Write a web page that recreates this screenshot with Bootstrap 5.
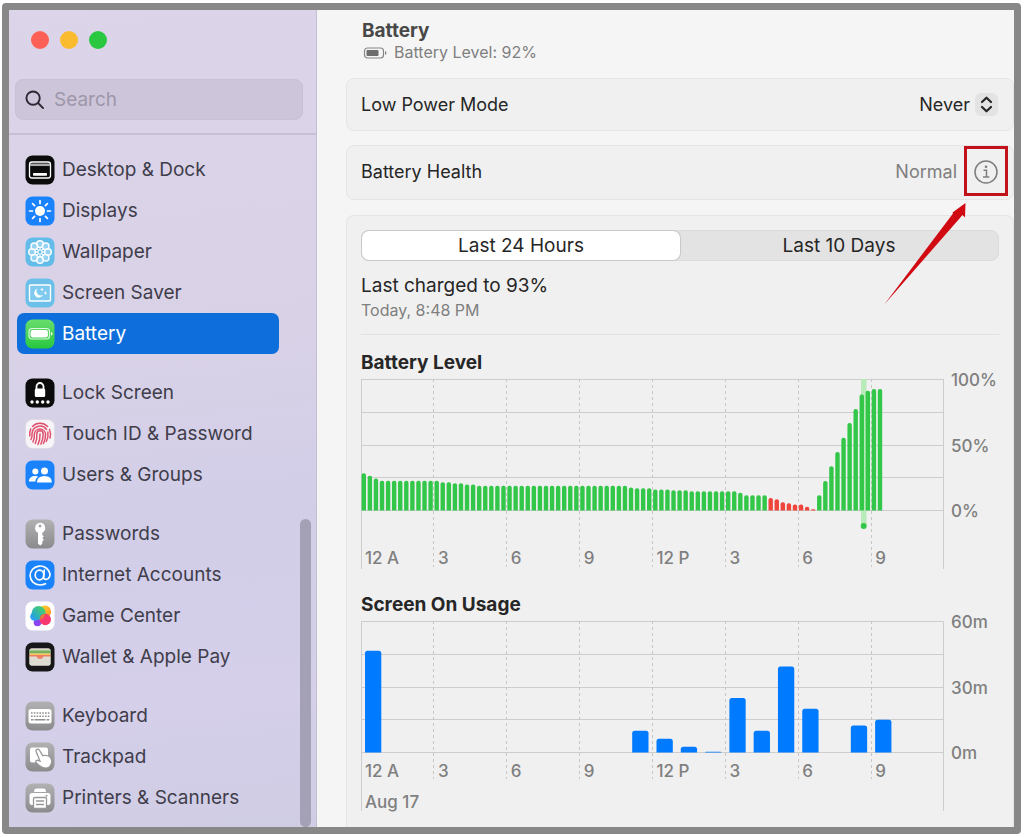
<!DOCTYPE html>
<html lang="en">
<head>
<meta charset="utf-8">
<meta name="viewport" content="width=device-width, initial-scale=1">
<title>Battery</title>
<link href="https://cdn.jsdelivr.net/npm/bootstrap@5.3.0/dist/css/bootstrap.min.css" rel="stylesheet">
<style>
  body { font-family: Inter, "Liberation Sans", sans-serif; font-size: 18px; line-height: 24px; color: #262626; background: #fff; }
  .window { margin: 3px 3px 2px 2px; border: 7px solid #888; border-radius: 4px; background: #f5f5f5; }

  /* sidebar */
  .sidebar { width: 308px; color: #403d4b; background: linear-gradient(175deg, #dcd4e8 0%, #d9d2e7 40%, #d2cee8 62%, #d5cfea 85%, #cfcde4 100%); border-right: 1px solid #c3bed2; }
  .lights { padding: 21px 0 0 22px; gap: 11px; }
  .light { width: 18px; height: 18px; border-radius: 50%; }
  .light-close { background: #fe5f57; }
  .light-min { background: #fbbb2e; }
  .light-zoom { background: #2ac840; }
  .search-wrap { margin: 30px 13px 13px 6px; height: 41px; padding: 1px 0 0 9px; gap: 9px; border-radius: 8px; background: #cdc5d9; border: 1px solid #c9c1d6; }
  .search-wrap input { font-size: 19px; color: #403d4b; }
  .search-wrap input::placeholder { color: #9e97aa; opacity: 1; }
  .side-list { border-top: 2px solid #c7bfd5; padding: 14px 37px 8px 8px; font-size: 19px; }
  .side-group { margin: 0 0 18px; }
  .side-group:last-child { margin: 0; }
  .side-item { height: 41px; padding-left: 8px; gap: 7px; border-radius: 7px; color: inherit; text-decoration: none; white-space: nowrap; }
  .side-item.active { background: #0e6fdc; color: #fff; }
  .side-item svg { width: 30px; height: 30px; flex: none; }
  .thumb { right: 5px; bottom: 0; width: 11px; height: 308px; border-radius: 6px; background: #a4a1b6; }

  /* main pane */
  .pane { padding: 9px 0 0 29px; min-width: 0; }
  .pane-head { padding: 0 16px 16px; color: #484848; }
  .pane-head h1 { font-size: 19px; line-height: 24px; font-weight: 700; }
  .pane-sub { font-size: 16px; line-height: 19px; gap: 6px; color: #7f7f7f; }
  .panel { background: #f0f0f0; border: 1px solid #e5e5e5; border-radius: 8px; padding: 0 14px; margin: 0 0 15px; }
  .panel-power { height: 53px; margin: 0 0 14px; }
  .panel-health { height: 55px; padding-bottom: 1px; }
  .panel-usage { border-bottom: 0; border-radius: 8px 8px 0 0; padding: 14px 14px 14px; margin: 0; }
  .mode-select { appearance: none; border: 0; background: none; color: #262626; padding: 0 29px 0 0; text-align-last: right; font-size: 18px; }
  .chip { right: 1px; width: 23px; height: 23px; border-radius: 6px; background: #e3e3e3; pointer-events: none; }
  .info-btn { width: 24px; height: 24px; margin: 0 1px 0 17px; }
  .callout-box { top: 0; right: 5px; width: 44px; height: 50px; border: 3px solid #c1121b; pointer-events: none; }
  .callout-arrow { top: 56px; right: 45px; pointer-events: none; z-index: 2; }
  .text-dim { color: #7f7f7f; }
  .segments { height: 31px; border-radius: 8px; background: #e3e3e3; border: 1px solid #dcdcdc; font-size: 19px; }
  .segments button { flex: 1 1 0; border: 0; background: none; color: #262626; border-radius: 7px; padding: 0; }
  .segments .on { background: #fff; box-shadow: 0 0 0 1px #c9c9c9; }
  .charged { margin: 13px 0 0; font-size: 19px; }
  .charged-at { font-size: 16px; }
  .rule { height: 1px; background: #e2e2e2; margin: 12px 0 16px; }
  .panel-usage h2 { font-size: 19px; line-height: 24px; font-weight: 700; margin: 0 0 4px; }

  /* charts */
  .panel-usage .chart + h2 { margin-top: 24px; }
  .plot { display: grid; flex: 1 1 0; min-width: 0; font-size: 17px; line-height: 22px; font-weight: 500; }
  .plot > * { grid-area: 1 / 1; min-width: 0; }
  .plot svg { width: 100%; height: 190px; overflow: visible; }
  .plot-labels { align-self: start; white-space: nowrap; }
  .plot-labels span { padding-left: 4px; }
  .hours { display: grid; grid-template-columns: repeat(8, minmax(0, 1fr)); }
  .low-labels { margin-top: 168px; }
  .high-labels { margin-top: 139px; }
  .day { margin-top: 9px; }
  .scale-y { width: 55px; height: 151px; margin: -9px 0 0; padding-left: 7px; font-size: 17px; line-height: 20px; font-weight: 500; }
  .solid { stroke: #cdcdcd; stroke-width: 1; }
  .dash { stroke: #c6c6c6; stroke-width: 1; stroke-dasharray: 3 3; }
</style>
</head>
<body>
<div class="window d-flex overflow-hidden">

  <nav class="sidebar flex-shrink-0 position-relative" aria-label="Settings">
    <div class="lights d-flex">
      <span class="light light-close"></span><span class="light light-min"></span><span class="light light-zoom"></span>
    </div>
    <label class="search-wrap d-flex align-items-center">
      <svg width="20" height="20" viewBox="0 0 21 21" fill="none" stroke="#2b2733" stroke-width="2" stroke-linecap="round"><circle cx="8.500" cy="8.500" r="7"/><path d="M13.700 13.700L19 19"/></svg>
      <input class="border-0 bg-transparent p-0 w-75" type="search" placeholder="Search" aria-label="Search">
    </label>

    <div class="side-list">
      <div class="side-group">
        <a href="#" class="side-item d-flex align-items-center">
          <svg viewBox="0 0 30 30"><rect x=".5" y=".5" width="29" height="29" rx="7" fill="#0b0b0b"/><rect x="4.500" y="7" width="21" height="16" rx="2.500" fill="none" stroke="#fff" stroke-width="1.300"/><path d="M5 9.800h20" stroke="#aaa" stroke-width="2.500"/><rect x="8" y="18" width="14" height="2.800" rx=".8" fill="#fff"/></svg>
          Desktop &amp; Dock</a>
        <a href="#" class="side-item d-flex align-items-center">
          <svg viewBox="0 0 30 30"><rect x=".5" y=".5" width="29" height="29" rx="7" fill="#1a83fb"/><circle cx="15" cy="15" r="5" fill="#fff"/><path d="M15 4.500v3M15 22.500v3M4.500 15h3M22.500 15h3M7.600 7.600l2 2M20.400 20.400l2 2M22.400 7.600l-2 2M9.600 20.400l-2 2" stroke="#fff" stroke-width="1.700" stroke-linecap="round"/></svg>
          Displays</a>
        <a href="#" class="side-item d-flex align-items-center">
          <svg viewBox="0 0 30 30"><rect x=".5" y=".5" width="29" height="29" rx="7" fill="#62bce9"/><g fill="#b5e2f6" fill-opacity=".6" stroke="#fff" stroke-width="1.400"><circle cx="15" cy="7" r="3.300"/><circle cx="20.700" cy="9.300" r="3.300"/><circle cx="23" cy="15" r="3.300"/><circle cx="20.700" cy="20.700" r="3.300"/><circle cx="15" cy="23" r="3.300"/><circle cx="9.300" cy="20.700" r="3.300"/><circle cx="7" cy="15" r="3.300"/><circle cx="9.300" cy="9.300" r="3.300"/></g><path d="M15 10v10M10 15h10M11.500 11.500l7 7M18.500 11.500l-7 7" stroke="#fff" stroke-width="1.300"/><circle cx="15" cy="15" r="1.500" fill="#62bce9"/></svg>
          Wallpaper</a>
        <a href="#" class="side-item d-flex align-items-center">
          <svg viewBox="0 0 30 30"><rect x=".5" y=".5" width="29" height="29" rx="7" fill="#6cbfe9"/><rect x="4.500" y="7" width="21" height="16" rx="1" fill="#7fcaee" stroke="#fff" stroke-width="1.400"/><path d="M12.500 10.500a4.600 4.600 0 1 0 5.500 6.200a4.200 4.200 0 0 1-5.500-6.200z" fill="#fff"/><path d="M17 9.500l.6 1.400 1.400.6-1.400.6-.6 1.400-.6-1.400-1.400-.6 1.400-.6zM20.500 13l.6 1.400 1.400.6-1.400.6-.6 1.400-.6-1.400-1.400-.6 1.400-.6z" fill="#fff"/></svg>
          Screen Saver</a>
        <a href="#" class="side-item active d-flex align-items-center" aria-current="page">
          <svg viewBox="0 0 30 30"><defs><linearGradient id="gb" x2="0" y2="1"><stop stop-color="#69dd6d"/><stop offset="1" stop-color="#28c840"/></linearGradient></defs><rect x=".5" y=".5" width="29" height="29" rx="7" fill="url(#gb)"/><rect x="4" y="9.500" width="20.500" height="10.500" rx="3" fill="none" stroke="#fff" stroke-opacity=".8" stroke-width="1.200"/><rect x="5.600" y="11.100" width="17.300" height="7.300" rx="1.800" fill="#fff"/><path d="M26 13v3.500q1.500-.5 1.500-1.750T26 13z" fill="#fff"/></svg>
          Battery</a>
      </div>
      <div class="side-group">
        <a href="#" class="side-item d-flex align-items-center">
          <svg viewBox="0 0 30 30"><rect x=".5" y=".5" width="29" height="29" rx="7" fill="#0b0b0b"/><path d="M11.500 11V8.500a3.500 3.500 0 0 1 7 0V11" fill="none" stroke="#fff" stroke-width="1.800"/><rect x="9.800" y="10.500" width="10.400" height="8.500" rx="1.500" fill="#fff"/><g fill="#fff"><circle cx="7" cy="24" r="1.700"/><circle cx="12.300" cy="24" r="1.700"/><circle cx="17.700" cy="24" r="1.700"/><circle cx="23" cy="24" r="1.700"/></g></svg>
          Lock Screen</a>
        <a href="#" class="side-item d-flex align-items-center">
          <svg viewBox="0 0 30 30"><rect x=".5" y=".5" width="29" height="29" rx="7" fill="#f6f4f6" stroke="#dcd8e0" stroke-width=".6"/><g fill="none" stroke="#e0506e" stroke-width="1.500" stroke-linecap="round"><path d="M7.500 7.500a10.500 10.500 0 0 1 15 0M4.800 17a10.500 10.500 0 0 1 1-7M24.500 10.500q1.800 4 .5 8.500M6 20.500q1.300-2.500 1-5.500a8 8 0 0 1 14.500-4.500M22.900 13q.8 5-1.600 9.500M8 23q1.800-4 1.300-8a5.700 5.700 0 0 1 11.300 0q0 5-2.100 9.500M10.300 24.500q2-4.500 1.500-9.500a3.200 3.200 0 0 1 6.400 0q0 5.500-2.300 10.200M13 25.500q2.300-5 2-10.500"/></g></svg>
          Touch ID &amp; Password</a>
        <a href="#" class="side-item d-flex align-items-center">
          <svg viewBox="0 0 30 30"><rect x=".5" y=".5" width="29" height="29" rx="7" fill="#1a83fb"/><g fill="#fff"><circle cx="10.300" cy="11.500" r="3"/><path d="M3.800 21.500q.3-5.500 6.500-5.500 1.700 0 2.800.6-2.300 1.600-2.700 4.900z"/><circle cx="19.500" cy="11" r="3.500"/><path d="M12 22q.3-6 7.500-6t7.300 6q0 .6-.8.600H12.800q-.8 0-.8-.6z"/></g></svg>
          Users &amp; Groups</a>
      </div>
      <div class="side-group">
        <a href="#" class="side-item d-flex align-items-center">
          <svg viewBox="0 0 30 30"><defs><linearGradient id="gg" x2="0" y2="1"><stop stop-color="#b1b1b3"/><stop offset="1" stop-color="#8b8b8d"/></linearGradient></defs><rect x=".5" y=".5" width="29" height="29" rx="7" fill="url(#gg)"/><path fill-rule="evenodd" d="M15 3.700a5.300 5.300 0 0 1 2.300 10v2.200l1.500 1.500-1.500 1.600 1.500 1.700-1.500 1.800v2.200L15.300 26.600 13 24.700V13.700a5.300 5.300 0 0 1 2-10zM15 5.600a1.500 1.500 0 1 0 .01 0z" fill="#fff"/></svg>
          Passwords</a>
        <a href="#" class="side-item d-flex align-items-center">
          <svg viewBox="0 0 30 30"><rect x=".5" y=".5" width="29" height="29" rx="7" fill="#1a83fb"/><g fill="none" stroke="#fff" stroke-width="1.700" stroke-linecap="round"><ellipse cx="14.500" cy="15" rx="4.300" ry="4.800"/><path d="M19.300 10l-.7 7.200c-.2 3.300 6.400 3.200 6.400-3.200a10 9.500 0 1 0-10 11q3 0 5.500-1.200"/></g></svg>
          Internet Accounts</a>
        <a href="#" class="side-item d-flex align-items-center">
          <svg viewBox="0 0 30 30"><defs><linearGradient id="g1" x1="0" y1="0" x2="1" y2="1"><stop stop-color="#ffdc2e"/><stop offset="1" stop-color="#ff8a22"/></linearGradient><linearGradient id="g2" x1="1" x2="0" y2="1"><stop stop-color="#4fd850"/><stop offset="1" stop-color="#1f9cf0"/></linearGradient></defs><rect x=".5" y=".5" width="29" height="29" rx="7" fill="#fff"/><circle cx="19.800" cy="10.800" r="6.300" fill="url(#g1)"/><circle cx="12.500" cy="21.500" r="3.800" fill="#8a45f0"/><circle cx="9.500" cy="15.500" r="4.300" fill="#2ea0f5"/><circle cx="13.700" cy="12" r="7" fill="url(#g2)"/><circle cx="20.300" cy="18.500" r="5.700" fill="#f8386f"/><path d="M14.700 18.700a6 6 0 0 1 5.500-5.900 6.800 6.800 0 0 1-5.500 5.900z" fill="#e5793c"/></svg>
          Game Center</a>
        <a href="#" class="side-item d-flex align-items-center">
          <svg viewBox="0 0 30 30"><rect x=".5" y=".5" width="29" height="29" rx="7" fill="#17171a"/><rect x="4.500" y="6.500" width="21" height="17" rx="2" fill="#e2dfd5"/><path d="M4.500 9V8.500a2 2 0 0 1 2-2h17a2 2 0 0 1 2 2V9z" fill="#d8d8c6"/><path d="M4.500 8.500h21v3h-21z" fill="#78b15c"/><path d="M4.500 11.500h21V13h-21z" fill="#f0c55e"/><path d="M4.500 13h21v2.500h-6.300q-1 3-4.200 3t-4.200-3H4.500z" fill="#ee7f63"/><path d="M4.500 14.500h7q1 2.500 3.500 2.500t3.500-2.500h7v7a2 2 0 0 1-2 2h-17a2 2 0 0 1-2-2z" fill="#dedbd0"/></svg>
          Wallet &amp; Apple Pay</a>
      </div>
      <div class="side-group">
        <a href="#" class="side-item d-flex align-items-center">
          <svg viewBox="0 0 30 30"><rect x=".5" y=".5" width="29" height="29" rx="7" fill="url(#gg)"/><rect x="3.500" y="8" width="23" height="14.500" rx="2.500" fill="#fff"/><path d="M6 12h18.500M6 15.300h18.500" stroke="#8f8f91" stroke-width="1.600" stroke-dasharray="1.600 1.200"/><path d="M6 18.800h2.500M9.500 18.800h11M21.700 18.800h2.600" stroke="#8f8f91" stroke-width="1.500"/></svg>
          Keyboard</a>
        <a href="#" class="side-item d-flex align-items-center">
          <svg viewBox="0 0 30 30"><rect x=".5" y=".5" width="29" height="29" rx="7" fill="url(#gg)"/><rect x="5" y="5.500" width="18" height="15" rx="2" fill="#fff"/><path d="M11.500 7.700q1.600-1.400 2.900.4l3.300 5.500q4.700-.7 7.200 1.200 2.500 2.700 1.600 6.300-1.500 5-6 5-3.300 0-6.200-2.500l-3.500-3.300q-.3-2.300 2.200-2l2 .8-3.800-9.300q-.5-1.200.3-2.100z" fill="#fff" stroke="#98989a" stroke-width="1.300"/></svg>
          Trackpad</a>
        <a href="#" class="side-item d-flex align-items-center">
          <svg viewBox="0 0 30 30"><rect x=".5" y=".5" width="29" height="29" rx="7" fill="url(#gg)"/><path d="M9 9q0-3.500 2.500-3.500h7Q21 5.500 21 9z" fill="#fff"/><rect x="4.500" y="10" width="21" height="12" rx="2.500" fill="#fff"/><circle cx="21.500" cy="12.800" r="1" fill="#98989a"/><rect x="8.500" y="14.500" width="13" height="11" rx="1.500" fill="#fff" stroke="#98989a" stroke-width="1.300"/><path d="M11 18h8M11 21.500h8" stroke="#98989a" stroke-width="1.300"/></svg>
          Printers &amp; Scanners</a>
      </div>
    </div>
    <div class="thumb position-absolute"></div>
  </nav>

  <main class="pane flex-grow-1">
    <header class="pane-head">
      <h1 class="m-0">Battery</h1>
      <div class="pane-sub d-flex align-items-center">
        <svg width="26" height="14" viewBox="0 0 26 14"><rect x="2.500" y="2" width="19" height="10" rx="3" fill="none" stroke="#858585" stroke-width="1.200"/><rect x="4.500" y="4" width="12" height="6" rx="1" fill="#6d6d6d"/><path d="M23 5v4q1.500-.7 1.500-2T23 5z" fill="#858585"/></svg>
        <span>Battery Level: 92%</span>
      </div>
    </header>

    <section class="panel panel-power d-flex align-items-center justify-content-between">
      <label for="mode">Low Power Mode</label>
      <div class="d-flex align-items-center position-relative">
        <select id="mode" class="mode-select"><option>Never</option><option>Always</option></select>
        <span class="chip position-absolute d-flex align-items-center justify-content-center">
          <svg width="13" height="17" viewBox="0 0 13 17" fill="none" stroke="#262626" stroke-width="2.200" stroke-linecap="round" stroke-linejoin="round"><path d="M2 6l4.500-4.300L11 6M2 11l4.500 4.300L11 11"/></svg>
        </span>
      </div>
    </section>

    <section class="panel panel-health d-flex align-items-center position-relative">
      <span class="me-auto">Battery Health</span>
      <span class="text-dim">Normal</span>
      <button type="button" class="info-btn btn p-0 border-0 d-flex" aria-label="Battery health details">
        <svg width="24" height="24" viewBox="0 0 24 24" fill="none" stroke="#7d7d7d" stroke-width="1.500"><circle cx="12" cy="12" r="11"/><path d="M9.500 10.200h3v6.500M9 17h6.300" /><circle cx="12" cy="6.700" r="1.300" fill="#7d7d7d" stroke="none"/></svg>
      </button>
      <div class="callout-box position-absolute"></div>
      <svg class="callout-arrow position-absolute" width="84" height="104" viewBox="0 0 84 104"><path d="M.3 102.500L69 11.500 68.500 10.500 81.500 1 81 15.500 78.500 13 75.500 16.500z" fill="#d10a12"/></svg>
    </section>

    <section class="panel panel-usage">
      <div class="segments d-flex" role="group" aria-label="Period">
        <button type="button" class="on">Last 24 Hours</button>
        <button type="button">Last 10 Days</button>
      </div>
      <p class="charged">Last charged to 93%</p>
      <p class="charged-at text-dim m-0">Today, 8:48 PM</p>
      <div class="rule"></div>

      <h2>Battery Level</h2>
      <div class="chart d-flex text-dim">
        <div class="plot">
          <svg id="level" viewBox="0 0 583 190" preserveAspectRatio="none" role="img" aria-label="Battery level by quarter hour"></svg>
          <div class="plot-labels low-labels"><div class="hours"><span>12 A</span><span>3</span><span>6</span><span>9</span><span>12 P</span><span>3</span><span>6</span><span>9</span></div></div>
        </div>
        <div class="scale-y d-flex flex-column justify-content-between"><span>100%</span><span>50%</span><span>0%</span></div>
      </div>

      <h2>Screen On Usage</h2>
      <div class="chart d-flex text-dim">
        <div class="plot">
          <svg id="usage" viewBox="0 0 583 190" preserveAspectRatio="none" role="img" aria-label="Screen on minutes by hour"></svg>
          <div class="plot-labels high-labels"><div class="hours"><span>12 A</span><span>3</span><span>6</span><span>9</span><span>12 P</span><span>3</span><span>6</span><span>9</span></div><div class="day"><span>Aug 17</span></div></div>
        </div>
        <div class="scale-y d-flex flex-column justify-content-between"><span>60m</span><span>30m</span><span>0m</span></div>
      </div>
    </section>
  </main>
</div>

<script src="https://cdn.jsdelivr.net/npm/bootstrap@5.3.0/dist/js/bootstrap.bundle.min.js"></script>
<script>
  const W = 583, BASE = 131.5, RANGE = 131;
  const run = (value, count) => Array(count).fill(value);

  // Horizontal lines at each quarter, dashed lines every three hours.
  function frame(dashEnd) {
    let s = '';
    for (let i = 0; i <= 4; i++) { const y = Math.round(i * RANGE / 4) + .5; s += `<path class="solid" d="M0 ${y}H${W}"/>`; }
    for (let i = 1; i < 8; i++) { s += `<path class="dash" d="M${Math.floor(i * W / 8) + .5} 0V${dashEnd}"/>`; }
    return s + `<path class="solid" d="M.5 0V190M${W - .5} 0V190"/>`;
  }
  function bar(x, width, height, r, fill) {
    r = Math.min(r, height);
    return `<path fill="${fill}" d="M${x} ${BASE}v${-(height - r)}q0 ${-r} ${r} ${-r}h${width - 2 * r}q${r} 0 ${r} ${r}v${height - r}z"/>`;
  }

  const level = [28.5, 26.5, 24.5, ...run(22.7, 10), 21.5, 21.5, 20.8, 20.8, 19.8, 19.8, ...run(18.8, 25), 17.6, 17, 17, 17,
    ...run(16, 3), ...run(15.5, 3), ...run(14.6, 8), 13.6, ...run(11.6, 4), 9.5, 8.5, 6.3, 5.6, 4.6, 4.6, 2.8, 1,
    11.6, 22.5, 33.7, 44.6, 55.6, 66.7, 77.5, 88.6, 91.5, 92.8, 92.8];
  const step = W / 96;
  document.getElementById('level').innerHTML = frame(188)
    + '<path fill="#b9eab9" d="M500 0h5.500v146h-5.500z"/><circle cx="502.700" cy="147" r="3" fill="#32c748"/>'
    + level.map((v, i) => bar(i * step + .6, 4.4, v * RANGE / 100, 2, i > 66 && i < 75 ? '#f0453a' : '#32c748')).join('');

  const minutes = [46.6, 0, 0, 0, 0, 0, 0, 0, 0, 0, 0, 10, 6.3, 2.6, .4, 25, 10, 39.4, 20, 0, 12.4, 15];
  document.getElementById('usage').innerHTML = frame(158)
    + minutes.map((v, i) => v ? bar(i * W / 24 + 4, 16.3, v * RANGE / 60, 2.5, '#007aff') : '').join('');
</script>
</body>
</html>
